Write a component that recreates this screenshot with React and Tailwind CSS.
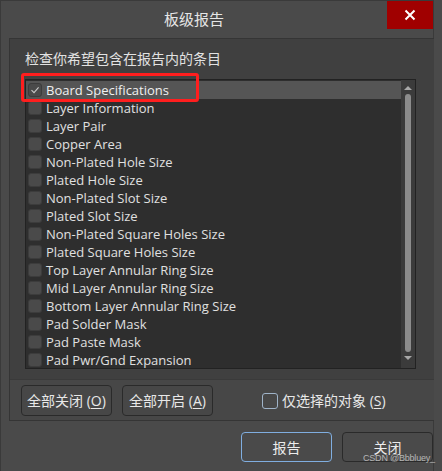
import React from "react";

const items = [
  "Board Specifications",
  "Layer Information",
  "Layer Pair",
  "Copper Area",
  "Non-Plated Hole Size",
  "Plated Hole Size",
  "Non-Plated Slot Size",
  "Plated Slot Size",
  "Non-Plated Square Holes Size",
  "Plated Square Holes Size",
  "Top Layer Annular Ring Size",
  "Mid Layer Annular Ring Size",
  "Bottom Layer Annular Ring Size",
  "Pad Solder Mask",
  "Pad Paste Mask",
  "Pad Pwr/Gnd Expansion",
];

const font = { fontFamily: '"Open Sans", "Noto Sans CJK SC", sans-serif' };

function Check({ checked }) {
  return (
    <div className="w-[14px] h-[14px] rounded-[3px] border border-[#3c3c3c] bg-[#4a4a4a] flex items-center justify-center shrink-0">
      {checked && (
        <svg width="10" height="10" viewBox="0 0 10 10">
          <path d="M1.5 5.2 L4 7.6 L8.6 2.4" fill="none" stroke="#c8c8c8" strokeWidth="1.1" />
        </svg>
      )}
    </div>
  );
}

export default function App() {
  return (
    <div
      className="relative w-[442px] h-[471px] bg-[#4a4a4a] text-[#e4e4e4] overflow-hidden"
      style={font}
    >
      <div className="w-[434px] h-[471px] border-l border-t border-r border-[#3a3a3a] flex flex-col">
        {/* title bar */}
        <div className="flex h-[37px] shrink-0">
          <div className="flex-1 flex items-center justify-center text-[15px] leading-none pb-[1px] text-[#e6e6e6]">
            板级报告
          </div>
          <div className="w-[46px] h-[28px] bg-[#a00000] flex items-center justify-center">
            <svg width="12" height="12" viewBox="0 0 12 12">
              <path d="M1.5 1.5 L10.5 10.5 M10.5 1.5 L1.5 10.5" stroke="#ffffff" strokeWidth="2" />
            </svg>
          </div>
        </div>

        {/* group box */}
        <div className="ml-[8px] w-[425px] h-[383px] border-l border-t border-b border-[#353535] flex flex-col">
          <div className="h-[340px] bg-[#404040] flex flex-col pl-[15px] pr-[17px]">
            <div className="pt-[10px] h-[40px] text-[14px] leading-[20px] text-[#e2e2e2]">
              检查你希望包含在报告内的条目
            </div>
            <div className="w-[391px] h-[290px] border border-[#222222] bg-[#2e2e2e] flex overflow-hidden">
              <div className="flex-1 flex flex-col pt-[1px]">
                {items.map((t, i) => (
                  <div
                    key={t}
                    className={`h-[18px] shrink-0 flex items-center pl-[2px] gap-[4px] text-[13px] leading-none ${
                      i === 0 ? "bg-[#555555] text-[#f0f0f0]" : "text-[#e0e0e0]"
                    }`}
                  >
                    <Check checked={i === 0} />
                    <span>{t}</span>
                  </div>
                ))}
              </div>
              <div className="w-[14px] bg-[#3b3b3b] flex flex-col items-center">
                <svg width="8" height="5" viewBox="0 0 8 5" className="mt-[5px]">
                  <path d="M0 5 L4 1 L8 5 Z" fill="#a8a8a8" />
                </svg>
                <div className="mt-[4px] w-[6px] h-[258px] rounded-[3px] bg-[#8c8c8c]" />
                <svg width="8" height="5" viewBox="0 0 8 5" className="mt-[4px]">
                  <path d="M0 0 L8 0 L4 4 Z" fill="#a8a8a8" />
                </svg>
              </div>
            </div>
          </div>
          <div className="flex-1 bg-[#474747] border-t border-[#3a3a3a] flex items-start pt-[5px] pl-[11px]">
            <button className="w-[91px] h-[31px] rounded-[4px] border border-[#2a2a2a] bg-[#474747] text-[14px] text-[#e8e8e8] flex items-center justify-center">
              全部关闭 (<span className="underline underline-offset-2">O</span>)
            </button>
            <button className="ml-[10px] w-[91px] h-[31px] rounded-[4px] border border-[#2a2a2a] bg-[#474747] text-[14px] text-[#e8e8e8] flex items-center justify-center">
              全部开启 (<span className="underline underline-offset-2">A</span>)
            </button>
            <div className="ml-[49px] h-[31px] flex items-center gap-[4px] text-[14px] text-[#e8e8e8]">
              <div className="w-[16px] h-[16px] rounded-[3px] border border-[#9fb3c8] bg-[#474747]" />
              <span>
                仅选择的对象 (<span className="underline underline-offset-2">S</span>)
              </span>
            </div>
          </div>
        </div>

        {/* bottom buttons */}
        <div className="flex justify-end gap-[10px] pt-[11px]">
          <button className="w-[91px] h-[30px] rounded-[4px] border border-[#80aee0] bg-[#4a4a4a] text-[14px] text-[#ececec] flex items-center justify-center">
            报告
          </button>
          <button className="w-[91px] h-[30px] rounded-[4px] border border-[#2a2a2a] bg-[#4a4a4a] text-[14px] text-[#ececec] flex items-center justify-center">
            关闭
          </button>
        </div>
      </div>

      {/* red highlight */}
      <div className="absolute left-[21px] top-[73px] w-[178px] h-[29px] border-[3px] border-[#ff1e1e] rounded-[3px] pointer-events-none" />

      {/* watermark */}
      <div
        className="absolute left-[363px] top-[452px] whitespace-nowrap text-[9px] leading-[12px] tracking-[-0.2px] text-[#d0d0d0] opacity-80"
        style={{ fontFamily: '"Liberation Sans", Arial, sans-serif' }}
      >
        CSDN @Bbbluey_
      </div>
    </div>
  );
}
